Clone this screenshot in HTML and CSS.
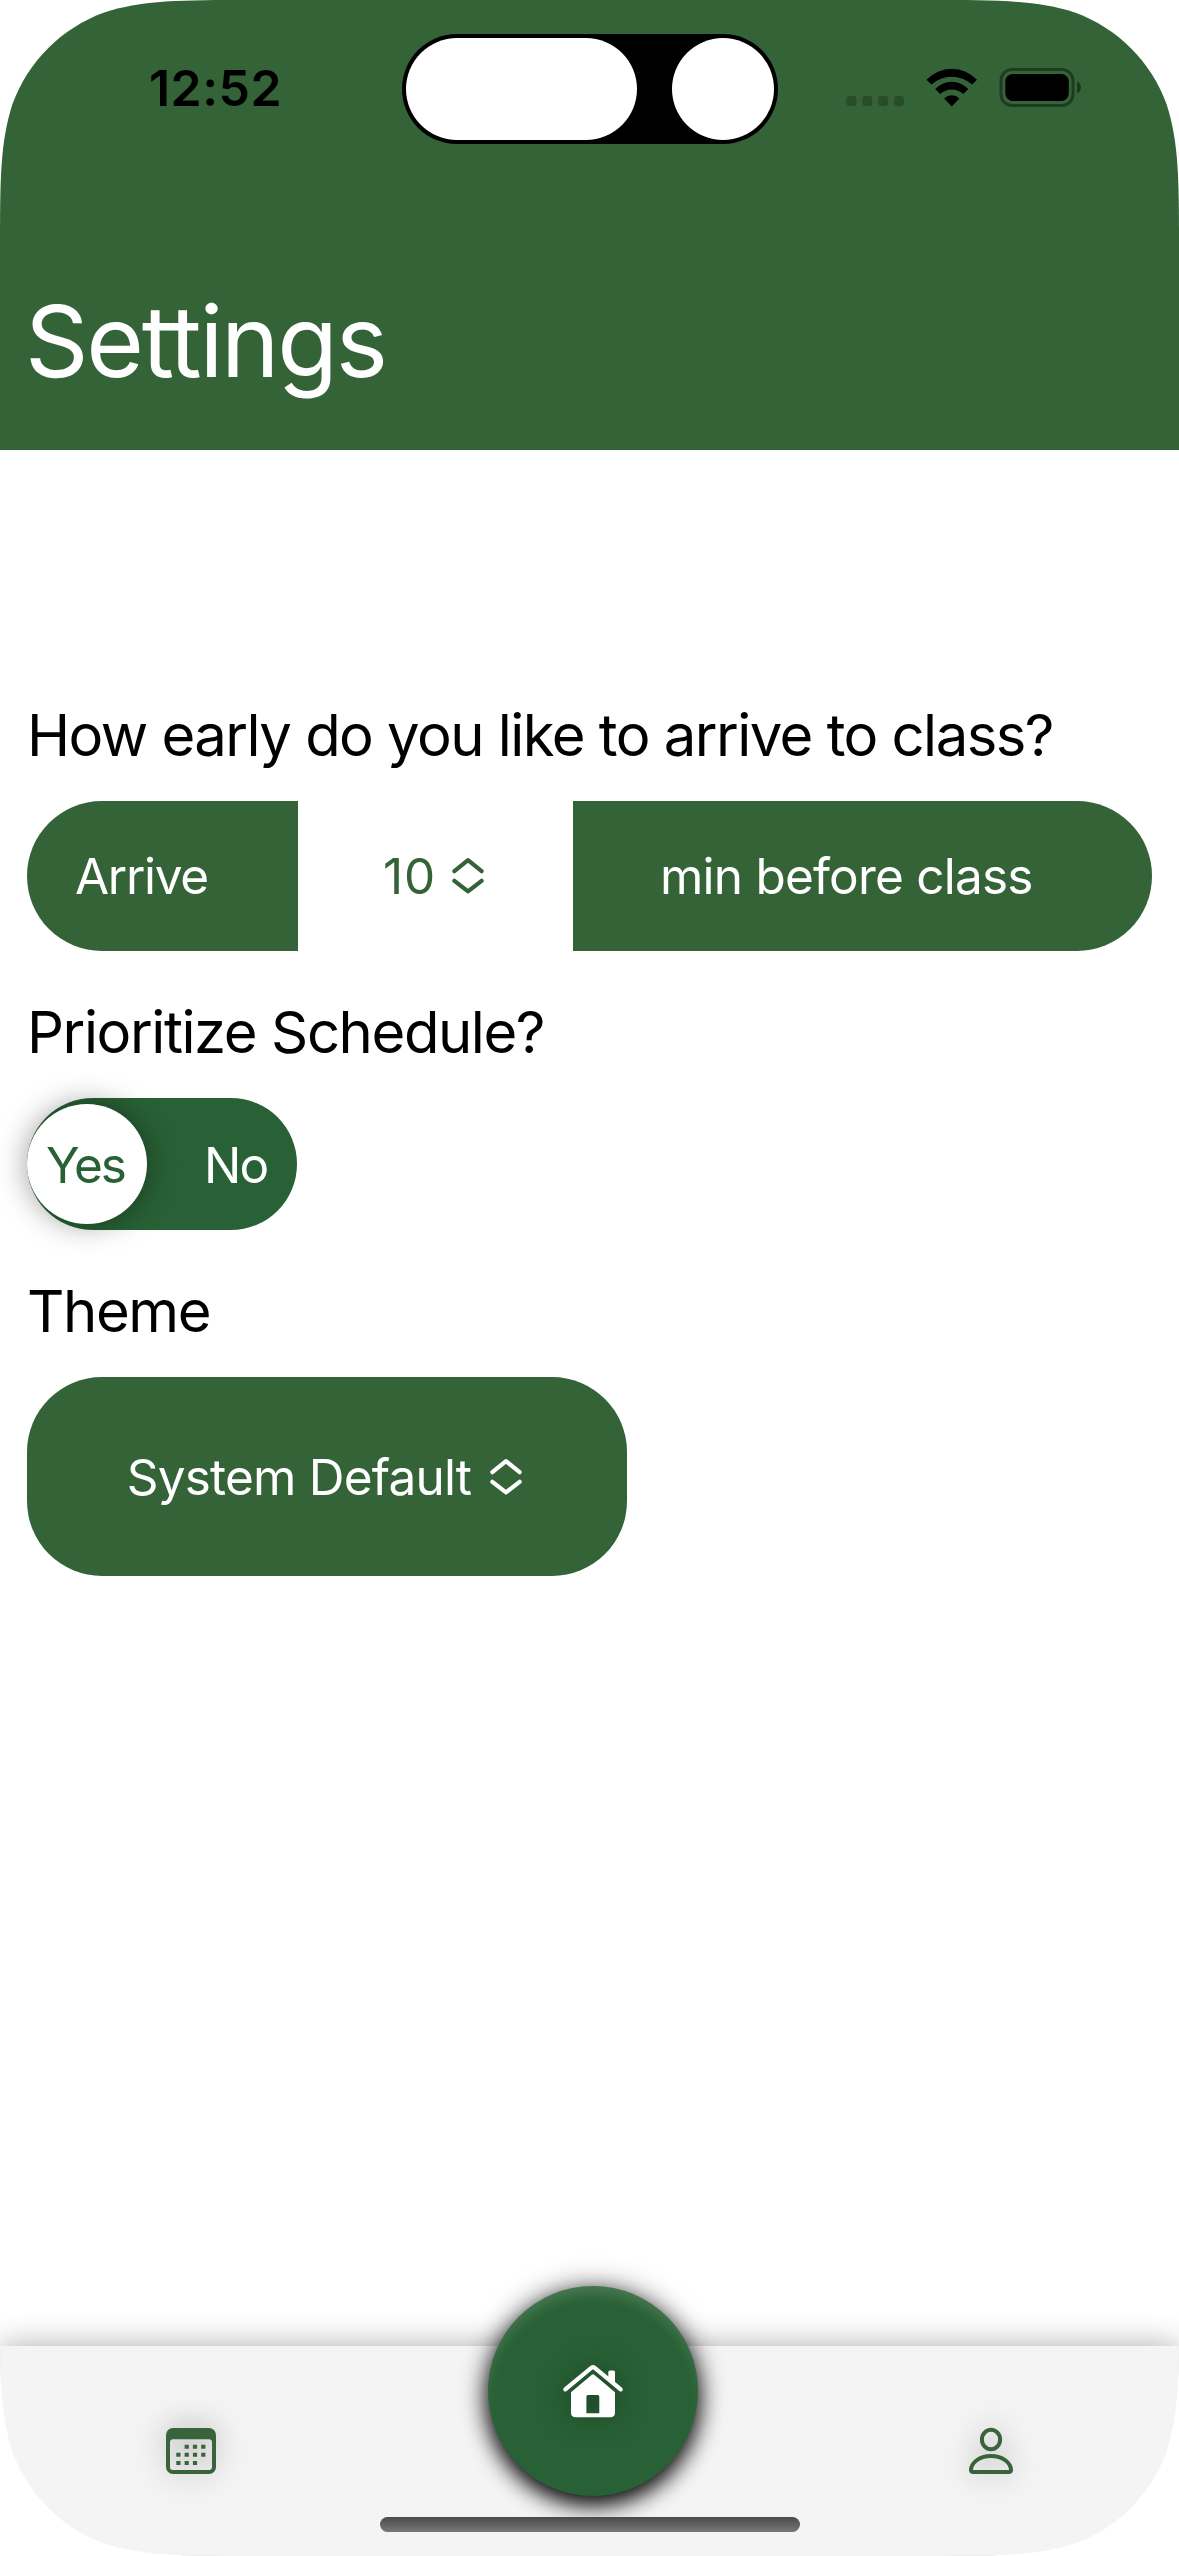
FILE: index.html
```html
<!DOCTYPE html>
<html lang="en">
<head>
<meta charset="utf-8">
<title>Settings</title>
<link rel="stylesheet" href="styles.css">
</head>
<body>
<div class="screen">
  <header class="header">
    <div class="status">
      <span class="time">12:52</span>
      <div class="island"><span class="island-pill"></span><span class="island-dot"></span></div>
      <svg class="status-icons" width="236" height="40" viewBox="846 68 236 40">
        <g fill-opacity=".22"><rect x="846.3" y="96" width="10" height="10" rx="3"/><rect x="862.2" y="96" width="10" height="10" rx="3"/><rect x="878.1" y="96" width="10" height="10" rx="3"/><rect x="894" y="96" width="10" height="10" rx="3"/></g>
        <path d="M926.5 79.8A34.5 34.5 0 0 1 977 79.8L972.1 84.6A30 30 0 0 0 931.4 84.6Z"/>
        <path d="M935.2 89A22.5 22.5 0 0 1 968.3 89L963.3 94A17 17 0 0 0 940.2 94Z"/>
        <path d="M944.1 98.4A11 11 0 0 1 959.4 98.4L951.75 106.4Z"/>
        <rect x="1001" y="69.5" width="72" height="36" rx="11" fill="none" stroke="#000" stroke-opacity=".4" stroke-width="3"/>
        <rect x="1005.3" y="74" width="63.5" height="27" rx="7.5"/>
        <path d="M1077 81.5C1082.2 83.5 1082.2 91.5 1077 93.5Z" fill-opacity=".45"/>
      </svg>
    </div>
    <h1 class="title">Settings</h1>
  </header>

  <main class="content">
    <section class="setting">
      <h2 class="label label-long">How early do you like to arrive to class?</h2>
      <div class="arrive">
        <div class="arrive-start">Arrive</div>
        <div class="arrive-value"><span class="number">10</span>
          <svg class="chevrons" width="32" height="36" viewBox="0 0 32 36"><path d="M2.4 13.2 16 2.2 29.6 13.2M2.4 22.8 16 33.4 29.6 22.8"/></svg>
        </div>
        <div class="arrive-end">min before class</div>
      </div>
    </section>
    <section class="setting">
      <h2 class="label">Prioritize Schedule?</h2>
      <div class="toggle">
        <div class="thumb">Yes</div>
        <div class="toggle-off">No</div>
      </div>
    </section>
    <section class="setting">
      <h2 class="label">Theme</h2>
      <div class="theme">System Default
        <svg class="chevrons" width="32" height="36" viewBox="0 0 32 36"><path d="M2.4 13.2 16 2.2 29.6 13.2M2.4 22.8 16 33.4 29.6 22.8"/></svg>
      </div>
    </section>
  </main>

  <nav class="tabbar">
    <svg class="tab-icon" width="50" height="46" viewBox="0 0 50 46">
      <path fill-rule="evenodd" d="M7 0H43A7 7 0 0 1 50 7V39A7 7 0 0 1 43 46H7A7 7 0 0 1 0 39V7A7 7 0 0 1 7 0ZM7 11.2A3 3 0 0 0 4 14.2V39A3 3 0 0 0 7 42H43A3 3 0 0 0 46 39V14.2A3 3 0 0 0 43 11.2Z"/>
      <path d="M18.6 16.7h4.2v4h-4.2zM26.9 16.7h4.2v4h-4.2zM35.2 16.7h4.2v4h-4.2zM10.3 24.8h4.2v4h-4.2zM18.6 24.8h4.2v4h-4.2zM26.9 24.8h4.2v4h-4.2zM35.2 24.8h4.2v4h-4.2zM10.3 33h4.2v4h-4.2zM18.6 33h4.2v4h-4.2zM26.9 33h4.2v4h-4.2z"/>
    </svg>
    <div class="home-button">
      <svg class="house" width="60" height="53" viewBox="0 0 60 53">
        <path class="roof" d="M2.3 24.4 28.6 2.6Q30 1.5 31.4 2.6L57.7 24.4"/>
        <path d="M45.3 15V7Q45.3 5.4 46.9 5.4H50.4Q52 5.4 52 7V20Z"/>
        <path fill-rule="evenodd" d="M8 27.3 28.8 9.8Q30 8.9 31.2 9.8L52 27.3V47.5Q52 52.3 47.2 52.3H12.8Q8 52.3 8 47.5ZM24.9 30Q23.4 30 23.4 31.5V48.3H36.3V31.5Q36.3 30 34.8 30Z"/>
      </svg>
    </div>
    <svg class="tab-icon" width="44" height="46" viewBox="0 0 44 46">
      <ellipse class="line" cx="22" cy="11.5" rx="9.1" ry="9.8"/>
      <path class="line" d="M4.3 44H39.7Q42 44 42 41.7C41.8 35.5 34.5 27.9 22 27.9S2.2 35.5 2 41.7Q2 44 4.3 44Z"/>
    </svg>
    <div class="home-indicator"></div>
  </nav>
</div>
</body>
</html>
```
FILE: styles.css
```css
* {
  box-sizing: border-box;
}

body {
  margin: 0;
  background: #fff;
  font-family: Inter, "Noto Sans", sans-serif;
}

.screen {
  display: flex;
  flex-direction: column;
  width: 1179px;
  height: 2556px;
  overflow: hidden;
  background: #fff;
  clip-path: path("M0 252.2C0 179.6 0 143.3 12.4 104.2C27.9 61.5 61.5 27.9 104.2 12.4C143.3 0 179.6 0 252.2 0H926.8C999.4 0 1035.7 0 1074.8 12.4C1117.5 27.9 1151.1 61.5 1166.6 104.2C1179 143.3 1179 179.6 1179 252.2V2303.8C1179 2376.4 1179 2412.7 1166.6 2451.8C1151.1 2494.5 1117.5 2528.1 1074.8 2543.6C1035.7 2556 999.4 2556 926.8 2556H252.2C179.6 2556 143.3 2556 104.2 2543.6C61.5 2528.1 27.9 2494.5 12.4 2451.8C0 2412.7 0 2376.4 0 2303.8Z");
}

.header {
  flex: none;
  height: 450px;
  background: #346338;
}

.status {
  display: flex;
  align-items: flex-start;
  height: 281px;
  padding: 34px 97px 0 149px;
}

.time {
  width: 253px;
  margin-top: 24px;
  font-size: 50px;
  font-weight: 600;
  line-height: 60px;
  letter-spacing: 0.45px;
}

.island {
  display: flex;
  justify-content: space-between;
  width: 376px;
  height: 110px;
  padding: 4px;
  border-radius: 55px;
  background: #000;
}

.island-pill {
  width: 231px;
  border-radius: 51px;
  background: #fff;
}

.island-dot {
  width: 102px;
  border-radius: 50%;
  background: #fff;
}

.status-icons {
  margin: 34px 0 0 auto;
}

.title {
  margin: 0;
  padding-left: 25px;
  color: #fff;
  font-size: 99px;
  font-weight: 400;
  line-height: 120px;
  letter-spacing: -2.3px;
}

.content {
  display: flex;
  flex: 1;
  flex-direction: column;
  gap: 48px;
  padding: 252px 27px 0;
}

.label {
  margin: 0 0 33px;
  font-size: 58px;
  font-weight: 400;
  line-height: 66px;
  letter-spacing: -1.42px;
  white-space: nowrap;
}

.label-long {
  letter-spacing: -1.54px;
}

.arrive {
  display: grid;
  grid-template-columns: 271px 275px 579px;
  height: 150px;
  border-radius: 75px;
  overflow: hidden;
  color: #fff;
  font-size: 49.5px;
}

.arrive-start,
.arrive-value,
.arrive-end {
  display: flex;
  align-items: center;
}

.arrive-start {
  padding-left: 48px;
  background: #346338;
  letter-spacing: -1.3px;
}

.arrive-value {
  gap: 16px;
  padding-left: 85px;
  color: #346338;
}

.number {
  letter-spacing: 0.9px;
}

.arrive-end {
  padding-left: 87px;
  background: #346338;
  letter-spacing: -0.78px;
}

.chevrons {
  fill: none;
  stroke: currentColor;
  stroke-width: 4.2;
  stroke-linecap: round;
  stroke-linejoin: round;
}

.toggle {
  display: flex;
  align-items: center;
  width: 270px;
  height: 132px;
  padding-top: 1px;
  border-radius: 66px;
  background: #286135;
  color: #fff;
  font-size: 49.5px;
  letter-spacing: -1.9px;
}

.thumb {
  width: 120px;
  height: 120px;
  margin-top: -1px;
  padding-left: 19px;
  border-radius: 50%;
  background: #fff;
  box-shadow: 0 0 30px rgba(0, 0, 0, 0.4);
  color: #286135;
  line-height: 122px;
}

.toggle-off {
  padding-left: 57px;
}

.theme {
  display: flex;
  align-items: center;
  justify-content: center;
  gap: 19px;
  width: 600px;
  height: 199px;
  padding-right: 5px;
  border-radius: 75px;
  background: #346338;
  color: #fff;
  font-size: 49.5px;
  letter-spacing: -0.8px;
}

.tabbar {
  position: relative;
  display: flex;
  flex: none;
  align-items: flex-start;
  justify-content: space-between;
  height: 210px;
  padding: 0 166px;
  background: #f4f4f4;
  box-shadow: 0 0 30px rgba(0, 0, 0, 0.33);
}

.tab-icon {
  margin-top: 82px;
  overflow: visible;
  fill: #38633b;
  filter: drop-shadow(0 0 15px rgba(0, 0, 0, 0.33));
}

.line {
  fill: none;
  stroke: #38633b;
  stroke-width: 4;
}

.home-button {
  display: flex;
  align-items: center;
  justify-content: center;
  width: 210px;
  height: 210px;
  margin: -60px 0 0 1px;
  border-radius: 50%;
  background: #286135;
  box-shadow:
    inset 0 12px 14px -5px rgba(255, 255, 255, 0.16),
    0 0 30px rgba(0, 0, 0, 0.4),
    0 9px 22px rgba(0, 0, 0, 0.95);
}

.house {
  margin-top: 1px;
  overflow: visible;
  fill: #fff;
  filter: drop-shadow(0 0 15px rgba(0, 0, 0, 0.33));
}

.roof {
  fill: none;
  stroke: #fff;
  stroke-width: 4.2;
  stroke-linecap: round;
}

.home-indicator {
  position: absolute;
  bottom: 24px;
  left: 380px;
  width: 420px;
  height: 15px;
  border-radius: 8px;
  background: linear-gradient(#4a4a4a, #787878);
}
```
